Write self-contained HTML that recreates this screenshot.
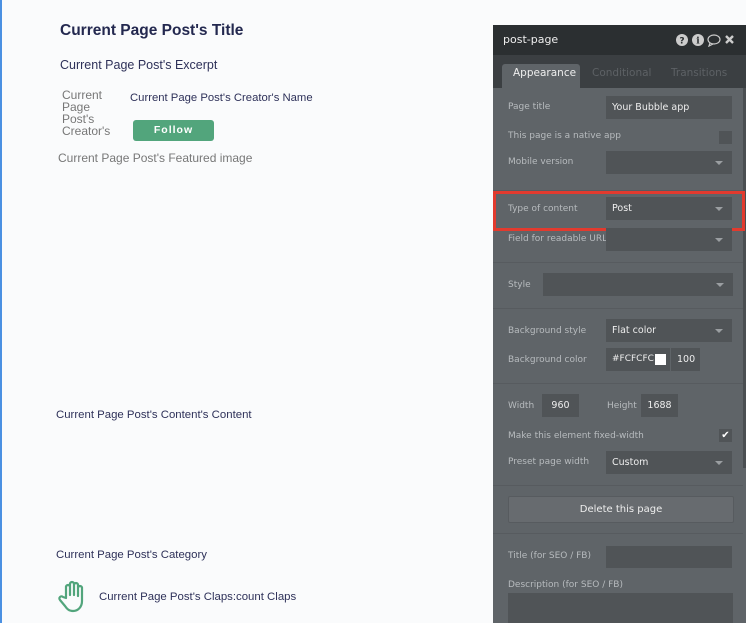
<!DOCTYPE html><html><head><style>
body{margin:0;width:746px;height:623px;background:#fafbfc;position:relative;overflow:hidden;font-family:"Liberation Sans",sans-serif}
.a{position:absolute;white-space:nowrap}
.n{color:#2e3159}
#p{position:absolute;left:493px;top:25px;width:253px;height:598px;background:#5f6468;font-family:"DejaVu Sans",sans-serif}
#p .a{font-size:9px}
.l{color:#b7bbbe}
.i{position:absolute;background:#505457;color:#eee;font-size:9.5px;line-height:23px;padding-left:6px;box-sizing:border-box}
.dd:after{content:"";position:absolute;right:9px;top:10px;border:4px solid transparent;border-top-color:#9a9ea1}
.hr{position:absolute;left:0;width:250px;height:1px;background:#575b5f}
</style></head><body>
<div style="position:absolute;left:0;top:0;width:2px;height:623px;background:#4a90e2"></div>
<div class="a n" style="left:60px;top:22px;font-size:15.5px;font-weight:bold;color:#23284f">Current Page Post's Title</div>
<div class="a n" style="left:60px;top:58px;font-size:12.5px">Current Page Post's Excerpt</div>
<div class="a" style="left:62px;top:89px;font-size:12px;line-height:12px;color:#777">Current<br>Page<br>Post's<br>Creator's</div>
<div class="a n" style="left:130px;top:92px;font-size:11.3px">Current Page Post's Creator's Name</div>
<div class="a" style="left:133px;top:120px;width:81px;height:21px;background:#52a57c;border-radius:3px;color:#fff;font-size:10.5px;font-weight:bold;letter-spacing:1px;text-align:center;line-height:21px">Follow</div>
<div class="a" style="left:58px;top:151px;font-size:12px;color:#777">Current Page Post's Featured image</div>
<div class="a n" style="left:56px;top:409px;font-size:11.4px">Current Page Post's Content's Content</div>
<div class="a n" style="left:56px;top:549px;font-size:11.4px">Current Page Post's Category</div>
<svg class="a" style="left:57px;top:580px" width="33" height="33" viewBox="0 0 33 33"><path d="M9 18V7a2 2 0 0 1 4 0v8V4a2 2 0 0 1 4 0v11V5a2 2 0 0 1 4 0v11V8a2 2 0 0 1 4 0v13c0 6-4 10-9 10-4 0-6-2-8-5l-5-6a2 2 0 0 1 3-3z" fill="none" stroke="#52a57c" stroke-width="2.2" stroke-linejoin="round"/></svg>
<div class="a n" style="left:99px;top:591px;font-size:11.4px">Current Page Post's Claps:count Claps</div>

<div id="p">
<div style="position:absolute;left:0;top:0;width:253px;height:30px;background:#2b2f31"></div>
<div class="a" style="left:10px;top:8px;font-size:11px!important;color:#eee">post-page</div>
<svg class="a" style="left:183px;top:8px" width="70" height="14" viewBox="0 0 70 14">
<circle cx="6" cy="7" r="6" fill="#ccc"/><text x="6" y="10.5" font-size="9" font-weight="bold" text-anchor="middle" fill="#2b2f31" font-family="DejaVu Sans">?</text>
<circle cx="22" cy="7" r="6" fill="#ccc"/><text x="22" y="10.5" font-size="9" font-weight="bold" text-anchor="middle" fill="#2b2f31" font-family="DejaVu Serif">i</text>
<ellipse cx="38" cy="6.5" rx="6" ry="4.5" fill="none" stroke="#ccc" stroke-width="1.2"/><path d="M34 10l-1 3 4-2" fill="none" stroke="#ccc" stroke-width="1.2"/>
<path d="M50 3l7 7M57 3l-7 7" stroke="#ccc" stroke-width="2.4"/></svg>
<div style="position:absolute;left:0;top:30px;width:253px;height:33px;background:#3b3f42"></div>
<div style="position:absolute;left:9px;top:39px;width:78px;height:24px;background:#5f6468;border-radius:3px 3px 0 0"></div>
<div class="a" style="left:20px;top:42px;color:#eee;font-size:10.5px!important">Appearance</div>
<div class="a" style="left:99px;top:42px;color:#5d6165;font-size:10.5px!important">Conditional</div>
<div class="a" style="left:178px;top:42px;color:#5d6165;font-size:10.5px!important">Transitions</div>
<div style="position:absolute;left:250px;top:63px;width:3px;height:380px;background:#4a4e51"></div>
<div class="a l" style="left:15px;top:77px">Page title</div>
<div class="i" style="left:113px;top:71px;width:126px">Your Bubble app</div>
<div class="a l" style="left:15px;top:106px">This page is a native app</div>
<div style="position:absolute;left:226px;top:106px;width:13px;height:13px;background:#505457"></div>
<div class="a l" style="left:15px;top:132px">Mobile version</div>
<div class="i dd" style="left:113px;top:126px;width:126px">&nbsp;</div>
<div class="hr" style="top:165px"></div>
<div style="position:absolute;left:0;top:166px;width:247px;height:35px;border:3px solid #e23a2e;box-sizing:border-box;width:252px;height:40px"></div>
<div class="a l" style="left:15px;top:179px">Type of content</div>
<div class="i dd" style="left:113px;top:172px;width:126px">Post</div>
<div class="a l" style="left:15px;top:209px">Field for readable URL</div>
<div class="i dd" style="left:113px;top:203px;width:126px">&nbsp;</div>
<div class="hr" style="top:237px"></div>
<div class="a l" style="left:15px;top:255px">Style</div>
<div class="i dd" style="left:50px;top:248px;width:190px">&nbsp;</div>
<div class="hr" style="top:283px"></div>
<div class="a l" style="left:15px;top:301px">Background style</div>
<div class="i dd" style="left:113px;top:294px;width:126px">Flat color</div>
<div class="a l" style="left:15px;top:330px">Background color</div>
<div class="i" style="left:113px;top:323px;width:64px;font-size:9px">#FCFCFC</div>
<div style="position:absolute;left:162px;top:329px;width:11px;height:11px;background:#fff"></div>
<div class="i" style="left:178px;top:323px;width:29px">100</div>
<div class="hr" style="top:358px"></div>
<div class="a l" style="left:15px;top:376px">Width</div>
<div class="i" style="left:49px;top:369px;width:37px;text-align:center;padding:0">960</div>
<div class="a l" style="left:114px;top:376px">Height</div>
<div class="i" style="left:148px;top:369px;width:37px;text-align:center;padding:0">1688</div>
<div class="a l" style="left:15px;top:406px">Make this element fixed-width</div>
<div style="position:absolute;left:226px;top:404px;width:13px;height:13px;background:#505457;color:#fff;font-size:10px;line-height:13px;text-align:center">✔</div>
<div class="a l" style="left:15px;top:432px">Preset page width</div>
<div class="i dd" style="left:113px;top:426px;width:126px">Custom</div>
<div class="hr" style="top:460px"></div>
<div style="position:absolute;left:15px;top:471px;width:224px;height:25px;background:#676b6f;border:1px solid #575b5f;border-radius:2px;color:#eee;font-size:10px;text-align:center;line-height:25px">Delete this page</div>
<div class="hr" style="top:508px"></div>
<div class="a l" style="left:15px;top:526px">Title (for SEO / FB)</div>
<div class="i" style="left:113px;top:521px;width:126px;height:22px">&nbsp;</div>
<div class="a l" style="left:15px;top:555px">Description (for SEO / FB)</div>
<div class="i" style="left:15px;top:568px;width:225px;height:30px">&nbsp;</div>
</div>
</body></html>
